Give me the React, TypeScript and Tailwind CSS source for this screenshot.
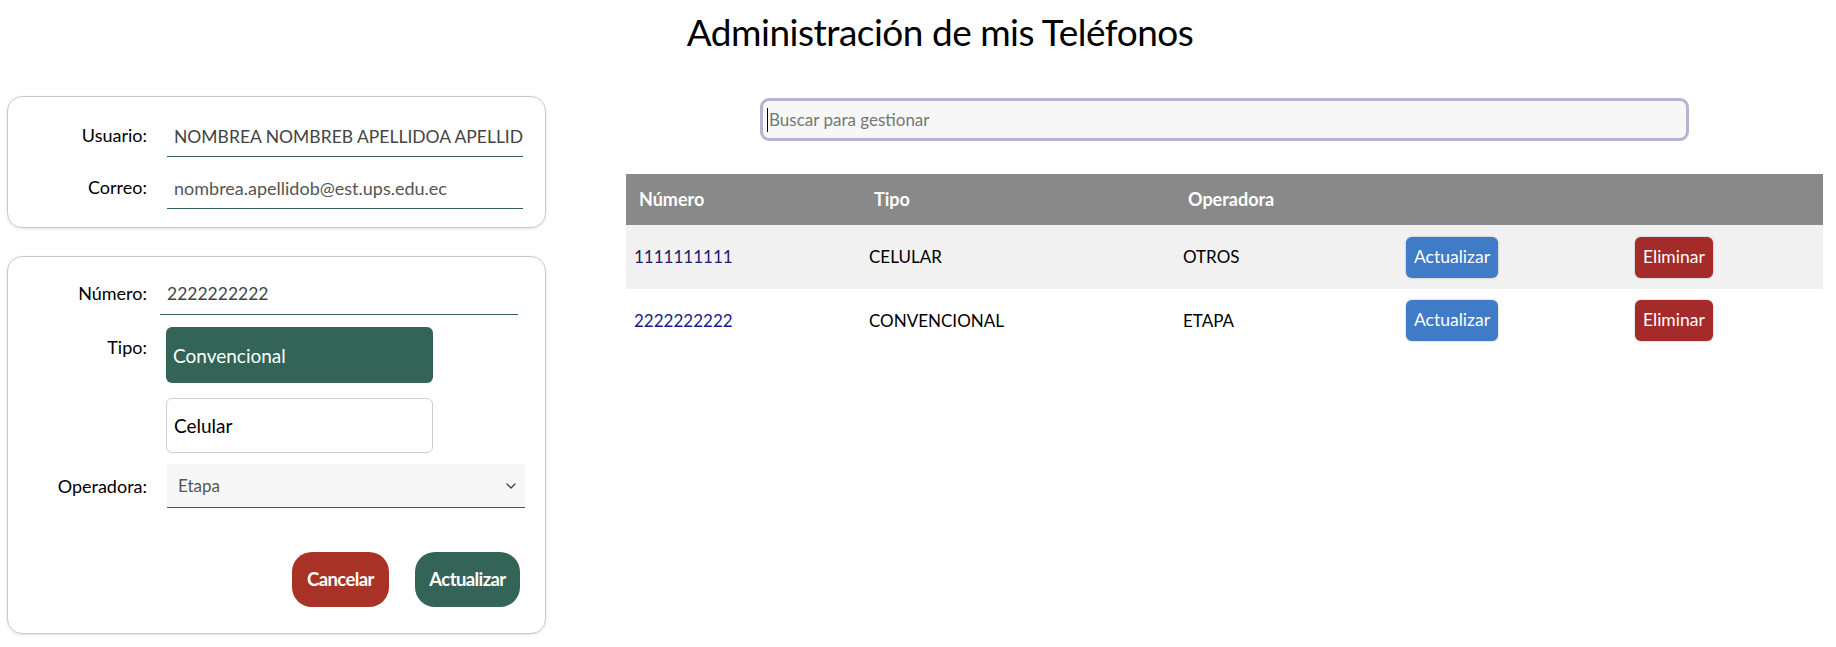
import React from "react";
import { ChevronDown } from "lucide-react";

const font = { fontFamily: "Lato, 'Noto Sans', sans-serif" };

export default function App() {
  return (
    <div className="w-[1836px] h-[647px] bg-white text-black overflow-hidden" style={font}>
      <div className="flex justify-center pl-[44px] pt-[8px] h-[60px]">
        <h1 className="text-[37px] leading-[48px] font-normal tracking-[-0.5px]">Administración de mis Teléfonos</h1>
      </div>
      <div className="flex mt-[36px]">
        {/* Left column */}
        <div className="ml-[7px] w-[539px] flex flex-col">
          <div className="border border-[#c9c9c9] rounded-[15px] shadow-[0_1px_3px_rgba(0,0,0,0.12)] pt-[25px] pb-[18px] flex flex-col gap-[17px]">
            <div className="flex items-end">
              <div className="w-[139px] text-right text-[18px] pb-[8px]">Usuario:</div>
              <div className="ml-[20px] w-[356px] h-[34px] border-b border-[#35634f] text-[17.5px] text-[#444] pl-[7px] pb-[6px] flex items-end whitespace-nowrap overflow-hidden">
                NOMBREA NOMBREB APELLIDOA APELLIDOB
              </div>
            </div>
            <div className="flex items-end">
              <div className="w-[139px] text-right text-[18px] pb-[8px]">Correo:</div>
              <div className="ml-[20px] w-[356px] h-[34px] border-b border-[#35634f] text-[18px] text-[#555] pl-[7px] pb-[6px] flex items-end whitespace-nowrap overflow-hidden">
                nombrea.apellidob@est.ups.edu.ec
              </div>
            </div>
          </div>

          <div className="mt-[28px] border border-[#c9c9c9] rounded-[15px] shadow-[0_1px_3px_rgba(0,0,0,0.12)] pt-[23px] pb-[26px] flex flex-col">
            <div className="flex items-end">
              <div className="w-[139px] text-right text-[18px] pb-[8px]">Número:</div>
              <div className="ml-[13px] w-[358px] h-[35px] border-b border-[#35634f] text-[17.5px] text-[#444] pl-[7px] pb-[7px] flex items-end">
                2222222222
              </div>
            </div>
            <div className="flex mt-[12px]">
              <div className="w-[139px] text-right text-[18px] pt-[7px]">Tipo:</div>
              <div className="ml-[19px] w-[267px] flex flex-col gap-[15px]">
                <div className="h-[56px] rounded-[6px] bg-[#346357] text-white text-[19px] pl-[7px] flex items-center pt-[2px]">Convencional</div>
                <div className="h-[55px] rounded-[6px] bg-white border border-[#cfcfcf] text-black text-[19px] pl-[7px] flex items-center pt-[2px]">Celular</div>
              </div>
            </div>
            <div className="flex items-center mt-[11px]">
              <div className="w-[139px] text-right text-[18px]">Operadora:</div>
              <div className="ml-[20px] w-[358px] h-[44px] bg-[#f7f7f7] border-b border-[#35634f] text-[17px] text-[#555] pl-[11px] pr-[6px] flex items-center justify-between">
                <span>Etapa</span>
                <ChevronDown size={16} strokeWidth={2} className="text-[#444]" />
              </div>
            </div>
            <div className="flex justify-end gap-[26px] mt-[44px] pr-[25px]">
              <button className="w-[97px] h-[55px] rounded-[20px] bg-[#a93226] text-white text-[18.5px] font-bold tracking-[-0.6px]">Cancelar</button>
              <button className="w-[105px] h-[55px] rounded-[20px] bg-[#346357] text-white text-[18.5px] font-bold tracking-[-0.6px]">Actualizar</button>
            </div>
          </div>
        </div>

        {/* Right column */}
        <div className="ml-[80px] w-[1197px] flex flex-col">
          <div className="flex justify-center mt-[2px]">
            <div className="w-[929px] h-[43px] rounded-[9px] border-[3px] border-[#b7b3d3] bg-[#f7f7f7] flex items-center pl-[4px]">
              <span className="w-px h-[24px] bg-black" />
              <span className="text-[17px] text-[#767676] ml-px">Buscar para gestionar</span>
            </div>
          </div>
          <table className="mt-[33px] w-full border-collapse text-[17px]">
            <colgroup>
              <col className="w-[235px]" />
              <col className="w-[314px]" />
              <col className="w-[223px]" />
              <col className="w-[229px]" />
              <col />
            </colgroup>
            <thead>
              <tr className="bg-[#898989] h-[51px] text-white font-bold text-[18px]">
                <th className="text-left pl-[13px] font-bold">Número</th>
                <th className="text-left pl-[13px] font-bold">Tipo</th>
                <th className="text-left pl-[13px] font-bold">Operadora</th>
                <th />
                <th />
              </tr>
            </thead>
            <tbody>
              <tr className="bg-[#f1f1f1] h-[64px]">
                <td className="pl-[8px] text-[#1c1c6b]">1111111111</td>
                <td className="pl-[8px]">CELULAR</td>
                <td className="pl-[8px]">OTROS</td>
                <td className="pl-[8px]">
                  <button className="h-[41px] px-[8px] rounded-[6px] bg-[#3f7bc7] text-white text-[17.5px] shadow-[0_0_2px_rgba(0,0,0,0.35)]">Actualizar</button>
                </td>
                <td className="pl-[8px]">
                  <button className="h-[41px] px-[8px] rounded-[6px] bg-[#a52a2a] text-white text-[17.5px] shadow-[0_0_2px_rgba(0,0,0,0.35)]">Eliminar</button>
                </td>
              </tr>
              <tr className="bg-white h-[63px]">
                <td className="pl-[8px] text-[#1a1a8a]">2222222222</td>
                <td className="pl-[8px]">CONVENCIONAL</td>
                <td className="pl-[8px]">ETAPA</td>
                <td className="pl-[8px]">
                  <button className="h-[41px] px-[8px] rounded-[6px] bg-[#3f7bc7] text-white text-[17.5px] shadow-[0_0_2px_rgba(0,0,0,0.35)]">Actualizar</button>
                </td>
                <td className="pl-[8px]">
                  <button className="h-[41px] px-[8px] rounded-[6px] bg-[#a52a2a] text-white text-[17.5px] shadow-[0_0_2px_rgba(0,0,0,0.35)]">Eliminar</button>
                </td>
              </tr>
            </tbody>
          </table>
        </div>
      </div>
    </div>
  );
}
